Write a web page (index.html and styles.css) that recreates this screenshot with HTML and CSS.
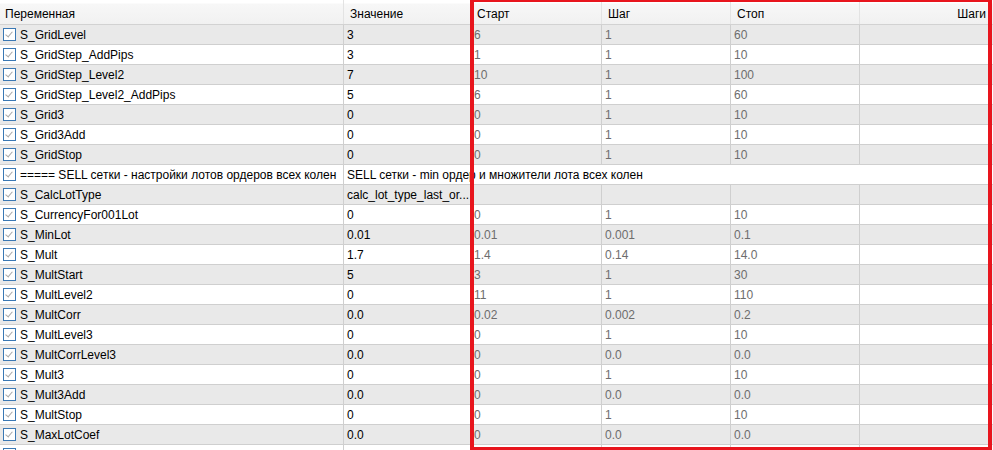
FILE: index.html
```html
<!DOCTYPE html>
<html>
<head>
<meta charset="utf-8">
<link rel="stylesheet" href="styles.css">
</head>
<body>
<div class="grid">
  <div class="row head">
    <div class="c c1"><span class="ht first">Переменная</span></div>
    <div class="c c2"><span class="ht">Значение</span></div>
    <div class="c c3"><span class="ht">Старт</span></div>
    <div class="c c4"><span class="ht">Шаг</span></div>
    <div class="c c5"><span class="ht">Стоп</span></div>
    <div class="c c6 right"><span class="ht">Шаги</span></div>
  </div>
  <div class="row odd"><div class="c c1"><span class="cb"></span>S_GridLevel</div><div class="c c2">3</div><div class="c c3 g">6</div><div class="c c4 g">1</div><div class="c c5 g">60</div><div class="c c6"></div></div>
  <div class="row"><div class="c c1"><span class="cb"></span>S_GridStep_AddPips</div><div class="c c2">3</div><div class="c c3 g">1</div><div class="c c4 g">1</div><div class="c c5 g">10</div><div class="c c6"></div></div>
  <div class="row odd"><div class="c c1"><span class="cb"></span>S_GridStep_Level2</div><div class="c c2">7</div><div class="c c3 g">10</div><div class="c c4 g">1</div><div class="c c5 g">100</div><div class="c c6"></div></div>
  <div class="row"><div class="c c1"><span class="cb"></span>S_GridStep_Level2_AddPips</div><div class="c c2">5</div><div class="c c3 g">6</div><div class="c c4 g">1</div><div class="c c5 g">60</div><div class="c c6"></div></div>
  <div class="row odd"><div class="c c1"><span class="cb"></span>S_Grid3</div><div class="c c2">0</div><div class="c c3 g">0</div><div class="c c4 g">1</div><div class="c c5 g">10</div><div class="c c6"></div></div>
  <div class="row"><div class="c c1"><span class="cb"></span>S_Grid3Add</div><div class="c c2">0</div><div class="c c3 g">0</div><div class="c c4 g">1</div><div class="c c5 g">10</div><div class="c c6"></div></div>
  <div class="row odd"><div class="c c1"><span class="cb"></span>S_GridStop</div><div class="c c2">0</div><div class="c c3 g">0</div><div class="c c4 g">1</div><div class="c c5 g">10</div><div class="c c6"></div></div>
  <div class="row"><div class="c c1"><span class="cb"></span>===== SELL сетки - настройки лотов ордеров всех колен</div><div class="c span">SELL сетки - min ордер и множители лота всех колен</div></div>
  <div class="row odd"><div class="c c1"><span class="cb"></span>S_CalcLotType</div><div class="c c2">calc_lot_type_last_or...</div><div class="c c3 g"></div><div class="c c4 g"></div><div class="c c5 g"></div><div class="c c6"></div></div>
  <div class="row"><div class="c c1"><span class="cb"></span>S_CurrencyFor001Lot</div><div class="c c2">0</div><div class="c c3 g">0</div><div class="c c4 g">1</div><div class="c c5 g">10</div><div class="c c6"></div></div>
  <div class="row odd"><div class="c c1"><span class="cb"></span>S_MinLot</div><div class="c c2">0.01</div><div class="c c3 g">0.01</div><div class="c c4 g">0.001</div><div class="c c5 g">0.1</div><div class="c c6"></div></div>
  <div class="row"><div class="c c1"><span class="cb"></span>S_Mult</div><div class="c c2">1.7</div><div class="c c3 g">1.4</div><div class="c c4 g">0.14</div><div class="c c5 g">14.0</div><div class="c c6"></div></div>
  <div class="row odd"><div class="c c1"><span class="cb"></span>S_MultStart</div><div class="c c2">5</div><div class="c c3 g">3</div><div class="c c4 g">1</div><div class="c c5 g">30</div><div class="c c6"></div></div>
  <div class="row"><div class="c c1"><span class="cb"></span>S_MultLevel2</div><div class="c c2">0</div><div class="c c3 g">11</div><div class="c c4 g">1</div><div class="c c5 g">110</div><div class="c c6"></div></div>
  <div class="row odd"><div class="c c1"><span class="cb"></span>S_MultCorr</div><div class="c c2">0.0</div><div class="c c3 g">0.02</div><div class="c c4 g">0.002</div><div class="c c5 g">0.2</div><div class="c c6"></div></div>
  <div class="row"><div class="c c1"><span class="cb"></span>S_MultLevel3</div><div class="c c2">0</div><div class="c c3 g">0</div><div class="c c4 g">1</div><div class="c c5 g">10</div><div class="c c6"></div></div>
  <div class="row odd"><div class="c c1"><span class="cb"></span>S_MultCorrLevel3</div><div class="c c2">0.0</div><div class="c c3 g">0</div><div class="c c4 g">0.0</div><div class="c c5 g">0.0</div><div class="c c6"></div></div>
  <div class="row"><div class="c c1"><span class="cb"></span>S_Mult3</div><div class="c c2">0</div><div class="c c3 g">0</div><div class="c c4 g">1</div><div class="c c5 g">10</div><div class="c c6"></div></div>
  <div class="row odd"><div class="c c1"><span class="cb"></span>S_Mult3Add</div><div class="c c2">0.0</div><div class="c c3 g">0</div><div class="c c4 g">0.0</div><div class="c c5 g">0.0</div><div class="c c6"></div></div>
  <div class="row"><div class="c c1"><span class="cb"></span>S_MultStop</div><div class="c c2">0</div><div class="c c3 g">0</div><div class="c c4 g">1</div><div class="c c5 g">10</div><div class="c c6"></div></div>
  <div class="row odd"><div class="c c1"><span class="cb"></span>S_MaxLotCoef</div><div class="c c2">0.0</div><div class="c c3 g">0</div><div class="c c4 g">0.0</div><div class="c c5 g">0.0</div><div class="c c6"></div></div>
  <div class="row"><div class="c c1"><span class="cb"></span></div><div class="c c2"></div><div class="c c3 g"></div><div class="c c4 g"></div><div class="c c5 g"></div><div class="c c6"></div></div>
</div>
<div class="mark"></div>
</body>
</html>
```
FILE: styles.css
```css
html, body {
  margin: 0;
  padding: 0;
  background: #fff;
  overflow: hidden;
  width: 993px;
  height: 450px;
}
body {
  position: relative;
  font-family: "Liberation Sans", Arial, sans-serif;
  font-size: 12px;
  color: #000;
}
.grid {
  display: flex;
  flex-direction: column;
}
.row {
  display: flex;
  height: 20px;
  border-bottom: 1px solid #cfcfcf;
  box-sizing: border-box;
  background: #fff;
}
.row.odd {
  background: #e9e9e9;
}
.row.head {
  height: 25px;
  border-bottom: 1px solid #d2d2d2;
  background: linear-gradient(#ffffff 0, #ffffff 3px, #f7f7f7 4px, #f1f1f1 100%);
}
.c {
  box-sizing: border-box;
  border-right: 1px solid #cfcfcf;
  display: flex;
  align-items: center;
  padding-left: 3px;
  padding-top: 1px;
  white-space: nowrap;
  overflow: hidden;
}
.head .c {
  border-right-color: #e3e3e3;
  padding-top: 3px;
}
.c1 { width: 344px; padding-left: 3px; }
.c2 { width: 127px; }
.c3 { width: 131px; }
.c4 { width: 129px; }
.c5 { width: 129px; }
.c6 { flex: 1; border-right: none; }
.span { flex: 1; border-right: none; overflow: visible; }
.right { justify-content: flex-end; padding-right: 7px; }
.ht { padding-left: 3px; }
.ht.first { padding-left: 2px; }
.right .ht { padding-left: 0; }
.g { color: #6d6d6d; }
.cb {
  width: 13px;
  height: 13px;
  box-sizing: border-box;
  border: 1px solid #3a78b4;
  background: #fff;
  margin-right: 4px;
  margin-top: -1px;
  flex: none;
  position: relative;
}
.cb::after {
  content: "";
  position: absolute;
  left: 3px;
  top: 1px;
  width: 3px;
  height: 6px;
  border-right: 1px solid #a8a8a8;
  border-bottom: 1px solid #a8a8a8;
  transform: rotate(40deg);
}
.mark {
  position: absolute;
  left: 470px;
  top: -2px;
  width: 522px;
  height: 453px;
  box-sizing: border-box;
  border: 4px solid #e8151d;
  pointer-events: none;
}
```
